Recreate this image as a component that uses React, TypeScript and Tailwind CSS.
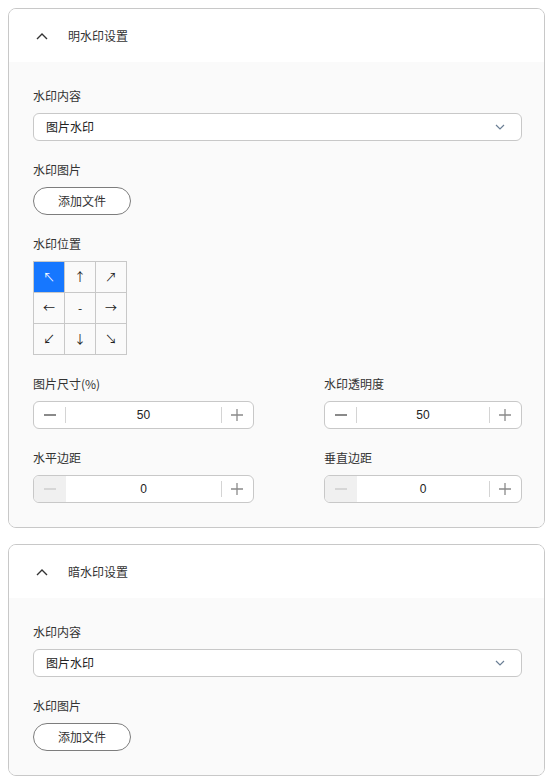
import React from "react";

const font = { fontFamily: '"Noto Sans CJK SC", "Noto Sans", sans-serif' };

function Chevron() {
  return (
    <svg width="12" height="8" viewBox="0 0 12 8" fill="none">
      <path d="M1 7 L6 2 L11 7" stroke="#333" strokeWidth="1.4" />
    </svg>
  );
}

function Label({ children }: { children: React.ReactNode }) {
  return <div className="h-5 leading-5 text-[12px] text-[#333] mb-[7px]">{children}</div>;
}

function Select() {
  return (
    <div className="h-7 w-full rounded-[6px] border border-[#c8c8c8] bg-white flex items-center justify-between pl-3 pr-4">
      <span className="text-[12px] text-[#222]">图片水印</span>
      <svg width="10" height="6" viewBox="0 0 10 6" fill="none">
        <path d="M1 1 L5 5 L9 1" stroke="#6b7f95" strokeWidth="1.2" />
      </svg>
    </div>
  );
}

function FileButton() {
  return (
    <div className="h-7 w-[98px] rounded-full border border-[#7d7d7d] bg-white flex items-center justify-center text-[12px] text-[#333]">
      添加文件
    </div>
  );
}

function NumberInput({ value, disabledMinus, width }: { value: string; disabledMinus?: boolean; width: string }) {
  return (
    <div className={`h-7 ${width} rounded-[6px] border border-[#c8c8c8] bg-white flex items-stretch overflow-hidden`}>
      <div
        className={`w-8 flex items-center justify-center relative ${disabledMinus ? "bg-[#f0f0f0]" : ""}`}
      >
        <span className={`block w-3 h-[1.5px] ${disabledMinus ? "bg-[#d6d6d6]" : "bg-[#8a8a8a]"}`} />
        {!disabledMinus && <span className="absolute right-0 top-[5px] bottom-[5px] w-px bg-[#d4d4d4]" />}
      </div>
      <div className="flex-1 flex items-center justify-center text-[12px] text-[#222]" style={{ fontFamily: '"Liberation Sans", Arial, sans-serif' }}>
        {value}
      </div>
      <div className="w-8 flex items-center justify-center relative">
        <span className="absolute left-0 top-[5px] bottom-[5px] w-px bg-[#d4d4d4]" />
        <svg width="14" height="14" viewBox="0 0 14 14" fill="none">
          <path d="M7 1 V13 M1 7 H13" stroke="#8a8a8a" strokeWidth="1.3" />
        </svg>
      </div>
    </div>
  );
}

function PositionGrid() {
  const arrows = ["↖", "↑", "↗", "←", "-", "→", "↙", "↓", "↘"];
  return (
    <div className="grid grid-cols-[repeat(3,30px)] gap-px bg-[#c8c8c8] border border-[#c8c8c8] w-fit">
      {arrows.map((a, i) => (
        <div
          key={i}
          className={`w-[30px] h-[30px] flex items-center justify-center text-[12px] ${
            i === 0 ? "bg-[#1677ff] text-white" : "bg-[#fafafa] text-[#222]"
          }`}
        >
          {a}
        </div>
      ))}
    </div>
  );
}

function Panel({ title, children }: { title: string; children: React.ReactNode }) {
  return (
    <div className="rounded-[8px] border border-[#c8c8c8] overflow-hidden">
      <div className="h-[53px] bg-white flex items-center pl-[27px]">
        <Chevron />
        <span className="ml-[20px] text-[12px] text-[#333]">{title}</span>
      </div>
      <div className="bg-[#fafafa] pl-6 pr-[22px] pt-6 pb-6 flex flex-col gap-[19px]">{children}</div>
    </div>
  );
}

export default function App() {
  return (
    <div className="w-[558px] h-[782px] bg-white pt-2 pl-2 pr-[13px] flex flex-col gap-4" style={font}>
      <Panel title="明水印设置">
        <div>
          <Label>水印内容</Label>
          <Select />
        </div>
        <div>
          <Label>水印图片</Label>
          <FileButton />
        </div>
        <div>
          <Label>水印位置</Label>
          <PositionGrid />
        </div>
        <div className="flex justify-between">
          <div>
            <Label>图片尺寸(%)</Label>
            <NumberInput value="50" width="w-[221px]" />
          </div>
          <div>
            <Label>水印透明度</Label>
            <NumberInput value="50" width="w-[198px]" />
          </div>
        </div>
        <div className="flex justify-between">
          <div>
            <Label>水平边距</Label>
            <NumberInput value="0" disabledMinus width="w-[221px]" />
          </div>
          <div>
            <Label>垂直边距</Label>
            <NumberInput value="0" disabledMinus width="w-[198px]" />
          </div>
        </div>
      </Panel>
      <Panel title="暗水印设置">
        <div>
          <Label>水印内容</Label>
          <Select />
        </div>
        <div>
          <Label>水印图片</Label>
          <FileButton />
        </div>
      </Panel>
    </div>
  );
}
